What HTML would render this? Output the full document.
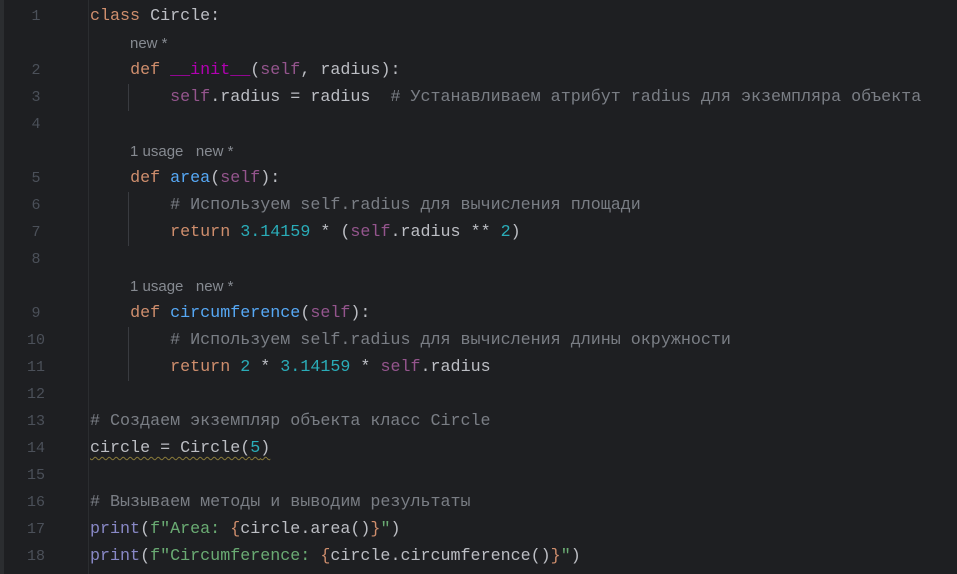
<!DOCTYPE html>
<html><head><meta charset="utf-8"><style>
body{margin:0;width:957px;height:574px;background:#1e1f22;overflow:hidden;position:relative;font-family:"Liberation Mono",monospace;font-size:16.7px;color:#bcbec4}
.strip{position:absolute;left:0;top:0;width:4px;height:574px;background:#2b2d30}
.sep{position:absolute;left:88px;top:0;width:1px;height:574px;background:#2b2d30}
.l{position:absolute;left:90px;height:27px;line-height:27px;white-space:pre}
.n{position:absolute;left:0;width:72px;text-align:center;height:27px;line-height:27px;color:#4b5059;font-size:15px}
.h{position:absolute;height:27px;line-height:27px;font-family:"Liberation Sans",sans-serif;font-size:15px;color:#868a91;white-space:pre}
.g{position:absolute;width:1px;background:#393b40}
.k{color:#cf8e6d}.s{color:#94558d}.m{color:#b200b2}.f{color:#56a8f5}.d{color:#2aacb8}.c{color:#7a7e85}.st{color:#6aab73}.b{color:#8888c6}
.w{text-decoration:underline wavy #8a7b3a;text-decoration-thickness:1px;text-underline-offset:4px}
</style></head><body>
<div class="strip"></div><div class="sep"></div>
<div class="g" style="left:128px;top:84px;height:27px"></div>
<div class="g" style="left:128px;top:192px;height:54px"></div>
<div class="g" style="left:128px;top:327px;height:54px"></div>

<div class="n" style="top:3px">1</div><div class="l" style="top:3px"><span class="k">class</span> Circle:</div>
<div class="h" style="left:130px;top:30px">new *</div>
<div class="n" style="top:57px">2</div><div class="l" style="top:57px">    <span class="k">def</span> <span class="m">__init__</span>(<span class="s">self</span>, radius):</div>
<div class="n" style="top:84px">3</div><div class="l" style="top:84px">        <span class="s">self</span>.radius = radius  <span class="c"># Устанавливаем атрибут radius для экземпляра объекта</span></div>
<div class="n" style="top:111px">4</div>
<div class="h" style="left:130px;top:138px">1 usage   new *</div>
<div class="n" style="top:165px">5</div><div class="l" style="top:165px">    <span class="k">def</span> <span class="f">area</span>(<span class="s">self</span>):</div>
<div class="n" style="top:192px">6</div><div class="l" style="top:192px">        <span class="c"># Используем self.radius для вычисления площади</span></div>
<div class="n" style="top:219px">7</div><div class="l" style="top:219px">        <span class="k">return</span> <span class="d">3.14159</span> * (<span class="s">self</span>.radius ** <span class="d">2</span>)</div>
<div class="n" style="top:246px">8</div>
<div class="h" style="left:130px;top:273px">1 usage   new *</div>
<div class="n" style="top:300px">9</div><div class="l" style="top:300px">    <span class="k">def</span> <span class="f">circumference</span>(<span class="s">self</span>):</div>
<div class="n" style="top:327px">10</div><div class="l" style="top:327px">        <span class="c"># Используем self.radius для вычисления длины окружности</span></div>
<div class="n" style="top:354px">11</div><div class="l" style="top:354px">        <span class="k">return</span> <span class="d">2</span> * <span class="d">3.14159</span> * <span class="s">self</span>.radius</div>
<div class="n" style="top:381px">12</div>
<div class="n" style="top:408px">13</div><div class="l" style="top:408px"><span class="c"># Создаем экземпляр объекта класс Circle</span></div>
<div class="n" style="top:435px">14</div><div class="l" style="top:435px"><span class="w">circle = Circle(<span class="d">5</span>)</span></div>
<div class="n" style="top:462px">15</div>
<div class="n" style="top:489px">16</div><div class="l" style="top:489px"><span class="c"># Вызываем методы и выводим результаты</span></div>
<div class="n" style="top:516px">17</div><div class="l" style="top:516px"><span class="b">print</span>(<span class="st">f"Area: </span><span class="k">{</span>circle.area()<span class="k">}</span><span class="st">"</span>)</div>
<div class="n" style="top:543px">18</div><div class="l" style="top:543px"><span class="b">print</span>(<span class="st">f"Circumference: </span><span class="k">{</span>circle.circumference()<span class="k">}</span><span class="st">"</span>)</div>
</body></html>
